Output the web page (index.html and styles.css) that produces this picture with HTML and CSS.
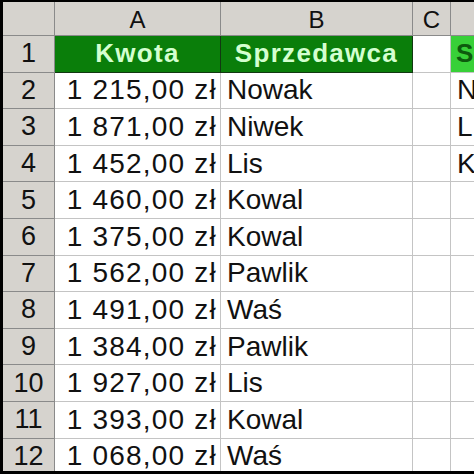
FILE: index.html
```html
<!DOCTYPE html>
<html>
<head>
<meta charset="utf-8">
<link rel="stylesheet" href="styles.css">
</head>
<body>
<div class="frame">
  <div class="sheet">
    <div class="corner"></div>
    <div class="colhead">A</div>
    <div class="colhead">B</div>
    <div class="colhead">C</div>
    <div class="colhead"></div>

    <div class="rowhead">1</div>
    <div class="title">Kwota</div>
    <div class="title">Sprzedawca</div>
    <div class="cell"></div>
    <div class="title2">S</div>

    <div class="rowhead">2</div><div class="cell num">1 215,00 zł</div><div class="cell txt">Nowak</div><div class="cell"></div><div class="cell txt">N</div>
    <div class="rowhead">3</div><div class="cell num">1 871,00 zł</div><div class="cell txt">Niwek</div><div class="cell"></div><div class="cell txt">L</div>
    <div class="rowhead">4</div><div class="cell num">1 452,00 zł</div><div class="cell txt">Lis</div><div class="cell"></div><div class="cell txt">K</div>
    <div class="rowhead">5</div><div class="cell num">1 460,00 zł</div><div class="cell txt">Kowal</div><div class="cell"></div><div class="cell"></div>
    <div class="rowhead">6</div><div class="cell num">1 375,00 zł</div><div class="cell txt">Kowal</div><div class="cell"></div><div class="cell"></div>
    <div class="rowhead">7</div><div class="cell num">1 562,00 zł</div><div class="cell txt">Pawlik</div><div class="cell"></div><div class="cell"></div>
    <div class="rowhead">8</div><div class="cell num">1 491,00 zł</div><div class="cell txt">Waś</div><div class="cell"></div><div class="cell"></div>
    <div class="rowhead">9</div><div class="cell num">1 384,00 zł</div><div class="cell txt">Pawlik</div><div class="cell"></div><div class="cell"></div>
    <div class="rowhead">10</div><div class="cell num">1 927,00 zł</div><div class="cell txt">Lis</div><div class="cell"></div><div class="cell"></div>
    <div class="rowhead">11</div><div class="cell num">1 393,00 zł</div><div class="cell txt">Kowal</div><div class="cell"></div><div class="cell"></div>
    <div class="rowhead">12</div><div class="cell num">1 068,00 zł</div><div class="cell txt">Waś</div><div class="cell"></div><div class="cell"></div>
  </div>
</div>
</body>
</html>
```

FILE: styles.css
```css
html, body {
  margin: 0;
  padding: 0;
  background: #000;
}
.frame {
  margin: 2px 0 0 3px;
  width: 471px;
  height: 469px;
  overflow: hidden;
  background: #fff;
}
.sheet {
  display: grid;
  grid-template-columns: 52px 166px 192px 38px 60px;
  grid-template-rows: 34px repeat(12, 36.6px);
  font-family: "Liberation Sans", Arial, sans-serif;
  color: #111;
}
.sheet > div {
  box-sizing: border-box;
  display: flex;
  align-items: center;
  white-space: nowrap;
  overflow: hidden;
}
.corner, .colhead, .rowhead {
  background: #d6d3ce;
  border-right: 1px solid #8a8a8a;
  border-bottom: 1px solid #8a8a8a;
  justify-content: center;
}
.colhead {
  font-size: 24px;
  padding-top: 2px;
}
.rowhead {
  font-size: 27px;
}
.cell {
  border-right: 1px solid #c4c4c4;
  border-bottom: 1px solid #c4c4c4;
  font-size: 28px;
}
.num {
  justify-content: flex-end;
  padding-right: 3px;
  letter-spacing: 1.2px;
}
.txt {
  padding-left: 6px;
}
.title {
  background: #0a7e0a;
  color: #d4ffd0;
  font-weight: bold;
  font-size: 26px;
  letter-spacing: 1.3px;
  justify-content: center;
  border-right: 1px solid #123812;
  border-bottom: 1px solid #123812;
}
.title2 {
  background: #38d038;
  color: #0d5a0d;
  font-weight: bold;
  font-size: 26px;
  padding-left: 5px;
  border-bottom: 1px solid #c4c4c4;
}
```
